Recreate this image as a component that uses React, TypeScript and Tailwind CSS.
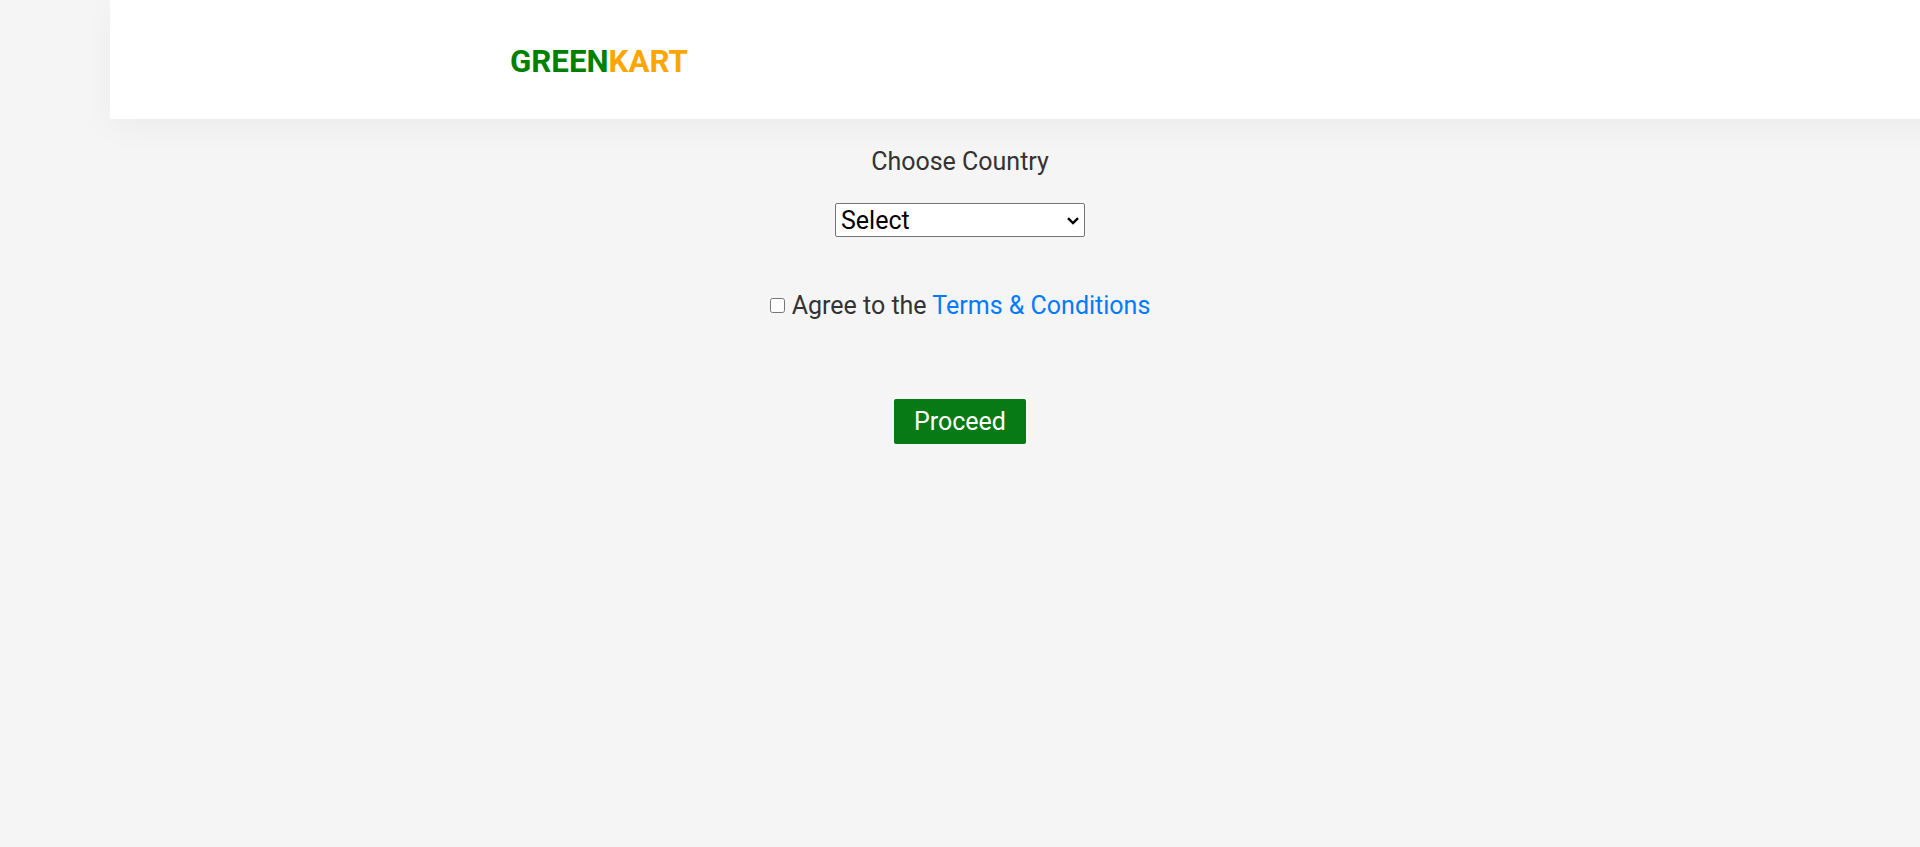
export default function App() {
  return (
    <div className="h-[847px] overflow-hidden bg-[#f5f5f5] text-[25px] leading-[28px] text-[#333] [font-family:Roboto,sans-serif]">
      <header className="-mr-[60px] ml-[110px] flex h-[119px] items-center bg-white pl-[400px] pt-[5px] shadow-[0_10px_30px_0_rgba(0,0,0,0.04)]">
        <div className="text-[31.25px] font-bold leading-none text-[#008000]">
          GREEN<span className="text-[#ffa500]">KART</span>
        </div>
      </header>
      <main className="flex flex-col items-center">
        <label className="mt-[29px]">Choose Country</label>
        <div className="relative mt-[27px] h-[34px] w-[250px]">
          <select className="block size-full appearance-none rounded-[2px] border border-[#767676] bg-white pl-[5px] pt-[2px] text-black">
            <option>Select</option>
          </select>
          <svg className="pointer-events-none absolute right-[6px] top-[14px]" width="12" height="8" viewBox="0 0 12 8" fill="none" stroke="#000" strokeWidth="2.4">
            <path d="M1 1.2 6 6 11 1.2" />
          </svg>
        </div>
        <div className="mt-[55px] flex items-center">
          <input type="checkbox" className="relative -top-px mr-[7px] size-[15px]" />
          <span>Agree to the <a className="text-[#007bff]">Terms &amp; Conditions</a></span>
        </div>
        <button className="mt-[79px] h-[45px] w-[132px] rounded-[2px] bg-[#077915] text-white">Proceed</button>
      </main>
    </div>
  );
}
